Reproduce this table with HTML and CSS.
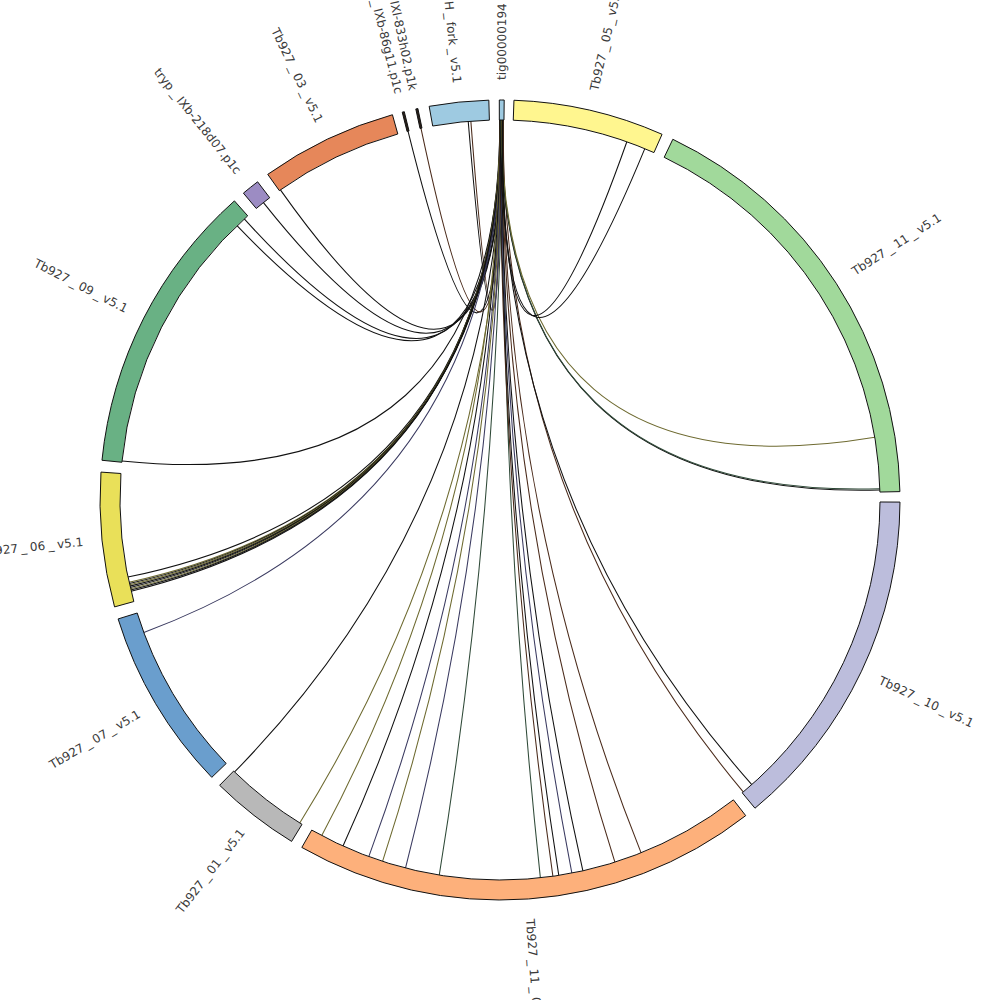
FILE: index.html
```html
<!DOCTYPE html>
<html lang="en">
<head>
<meta charset="utf-8">
<title>Circos plot</title>
<link rel="stylesheet" href="styles.css">
</head>
<body>
<div class="chart">
  <svg class="circos" viewBox="0 0 1000 1000" width="1000" height="1000" xmlns="http://www.w3.org/2000/svg">
    <g id="links" class="links"></g>
    <g id="ideograms" class="ideograms"></g>
    <g class="labels">
      <text class="lbl out" x="920" y="500" transform="rotate(-89.75 500 500)">tig00000194</text>
      <text class="lbl out" x="920" y="500" transform="rotate(-77.05 500 500)">Tb927<tspan dx="3">_</tspan><tspan dx="3">05</tspan><tspan dx="3">_</tspan><tspan dx="3">v5.1</tspan></text>
      <text class="lbl out" x="920" y="500" transform="rotate(-32.8 500 500)">Tb927<tspan dx="3">_</tspan><tspan dx="3">11</tspan><tspan dx="3">_</tspan><tspan dx="3">v5.1</tspan></text>
      <text class="lbl out" x="920" y="500" transform="rotate(25.35 500 500)">Tb927<tspan dx="3">_</tspan><tspan dx="3">10</tspan><tspan dx="3">_</tspan><tspan dx="3">v5.1</tspan></text>
      <text class="lbl out" x="920" y="500" transform="rotate(85.9 500 500)">Tb927<tspan dx="3">_</tspan><tspan dx="3">11</tspan><tspan dx="3">_</tspan><tspan dx="4">01</tspan><tspan dx="3">_</tspan><tspan dx="3">v5.1</tspan></text>
      <text class="lbl in" x="81" y="500" transform="rotate(-52.05 500 500)">Tb927<tspan dx="3">_</tspan><tspan dx="3">01</tspan><tspan dx="3">_</tspan><tspan dx="3">v5.1</tspan></text>
      <text class="lbl in" x="81" y="500" transform="rotate(-30.6 500 500)">Tb927<tspan dx="3">_</tspan><tspan dx="3">07</tspan><tspan dx="3">_</tspan><tspan dx="3">v5.1</tspan></text>
      <text class="lbl in" x="81" y="500" transform="rotate(-5.75 500 500)">Tb927<tspan dx="3">_</tspan><tspan dx="3">06</tspan><tspan dx="3">_</tspan><tspan dx="3">v5.1</tspan></text>
      <text class="lbl in" x="81" y="500" transform="rotate(27.05 500 500)">Tb927<tspan dx="3">_</tspan><tspan dx="3">09</tspan><tspan dx="3">_</tspan><tspan dx="3">v5.1</tspan></text>
      <text class="lbl in" x="81" y="500" transform="rotate(51.4 500 500)">tryp<tspan dx="3">_</tspan><tspan dx="3">IXb-218d07.p1c</tspan></text>
      <text class="lbl in" x="81" y="500" transform="rotate(64.45 500 500)">Tb927<tspan dx="3">_</tspan><tspan dx="3">03</tspan><tspan dx="3">_</tspan><tspan dx="3">v5.1</tspan></text>
      <text class="lbl in" x="81" y="500" transform="rotate(76.0 500 500)">tryp<tspan dx="3">_</tspan><tspan dx="3">IXb-86g11.p1c</tspan></text>
      <text class="lbl in" x="81" y="500" transform="rotate(78.0 500 500)">tryp<tspan dx="3">_</tspan><tspan dx="3">IXl-833h02.p1k</tspan></text>
      <text class="lbl in" x="81" y="500" transform="rotate(84.1 500 500)">Tb927<tspan dx="3">_</tspan><tspan dx="3">H</tspan><tspan dx="3">_</tspan><tspan dx="3">fork</tspan><tspan dx="3">_</tspan><tspan dx="3">v5.1</tspan></text>
    </g>
  </svg>
</div>
<script src="app.js"></script>
</body>
</html>
```

FILE: styles.css
```css
html, body {
  margin: 0;
  padding: 0;
  background: #ffffff;
}

.chart {
  width: 1000px;
  height: 1000px;
  overflow: hidden;
}

.circos {
  display: block;
}

.seg {
  stroke: #111111;
  stroke-width: 1;
  stroke-linejoin: miter;
}

.seg-tig  { fill: #9ecae1; }
.seg-c05  { fill: #fff68f; }
.seg-c11  { fill: #a1d99b; }
.seg-c10  { fill: #bcbddc; }
.seg-c11x { fill: #fdb07b; }
.seg-c01  { fill: #b8b8b8; }
.seg-c07  { fill: #6a9ecd; }
.seg-c06  { fill: #e9e059; }
.seg-c09  { fill: #69b184; }
.seg-t218 { fill: #9c8cc3; }
.seg-c03  { fill: #e6875a; }
.seg-thin { fill: #2a2018; }
.seg-hf   { fill: #9ecae1; }

.link {
  fill: none;
  stroke-width: 1.05;
}

.link-k  { stroke: #111111; }
.link-br { stroke: #4a2a1a; }
.link-gr { stroke: #2f4a38; }
.link-nv { stroke: #3a3a60; }
.link-ol { stroke: #6e6a30; }

.lbl {
  font-family: "DejaVu Sans", "Liberation Sans", sans-serif;
  font-size: 12px;
  fill: #3a3a3a;
  dominant-baseline: central;
}

.lbl.out {
  text-anchor: start;
}

.lbl.in {
  text-anchor: end;
}
```

FILE: app.js
```js
(function () {
  var NS = "http://www.w3.org/2000/svg";
  var C = 500, RI = 380, RO = 400;

  function pt(a, r) {
    var t = a * Math.PI / 180;
    return [C + r * Math.sin(t), C - r * Math.cos(t)];
  }
  function f(n) { return n.toFixed(2); }

  var segs = [
    ["tig", -0.1, 0.6],
    ["c05", 2.0, 23.9],
    ["c11", 25.6, 88.8],
    ["c10", 90.3, 140.4],
    ["c11x", 142.1, 209.7],
    ["c01", 211.4, 224.5],
    ["c07", 226.1, 252.7],
    ["c06", 254.5, 274.0],
    ["c09", 275.7, 318.4],
    ["t218", 320.1, 322.7],
    ["c03", 324.5, 344.4],
    ["thin", 345.85, 346.15],
    ["thin", 347.85, 348.15],
    ["hf", 349.8, 358.4]
  ];

  var links = [
    [355.2, "k"], [355.6, "br"],
    [346.0, "k"], [348.0, "br"],
    [324.7, "k"], [321.5, "k"], [317.7, "k"], [316.2, "k"],
    [275.9, "k"],
    [258.3, "k"], [257.5, "ol"], [257.3, "k"], [257.1, "ol"], [256.9, "k"],
    [256.7, "k"], [256.5, "ol"], [256.3, "k"], [256.1, "k"],
    [249.6, "nv"],
    [224.3, "k"], [211.8, "ol"],
    [207.97, "ol"], [204.4, "k"], [200.2, "nv"], [198.0, "ol"], [194.4, "nv"], [189.2, "gr"],
    [173.9, "gr"], [172.0, "br"], [171.1, "k"], [169.1, "nv"], [167.4, "k"],
    [162.4, "br"], [158.2, "br"],
    [140.2, "br"], [138.5, "k"],
    [88.5, "k"], [88.3, "gr"], [80.5, "ol"],
    [22.4, "k"], [19.5, "k"]
  ];

  var gl = document.getElementById("links");
  links.forEach(function (l, i) {
    var a = pt(l[0], RI);
    var hub = -0.02 + (i % 7) * 0.085;
    var b = pt(hub, RI);
    var p = document.createElementNS(NS, "path");
    p.setAttribute("d", "M" + f(a[0]) + "," + f(a[1]) + "Q" + C + "," + C + " " + f(b[0]) + "," + f(b[1]));
    p.setAttribute("class", "link link-" + l[1]);
    gl.appendChild(p);
  });

  var gi = document.getElementById("ideograms");
  segs.forEach(function (s) {
    var a0 = s[1], a1 = s[2];
    var large = (a1 - a0) > 180 ? 1 : 0;
    var p0 = pt(a0, RO), p1 = pt(a1, RO), p2 = pt(a1, RI), p3 = pt(a0, RI);
    var d = "M" + f(p0[0]) + "," + f(p0[1]) +
      "A" + RO + "," + RO + " 0 " + large + " 1 " + f(p1[0]) + "," + f(p1[1]) +
      "L" + f(p2[0]) + "," + f(p2[1]) +
      "A" + RI + "," + RI + " 0 " + large + " 0 " + f(p3[0]) + "," + f(p3[1]) + "Z";
    var p = document.createElementNS(NS, "path");
    p.setAttribute("d", d);
    p.setAttribute("class", "seg seg-" + s[0]);
    gi.appendChild(p);
  });
})();
```
